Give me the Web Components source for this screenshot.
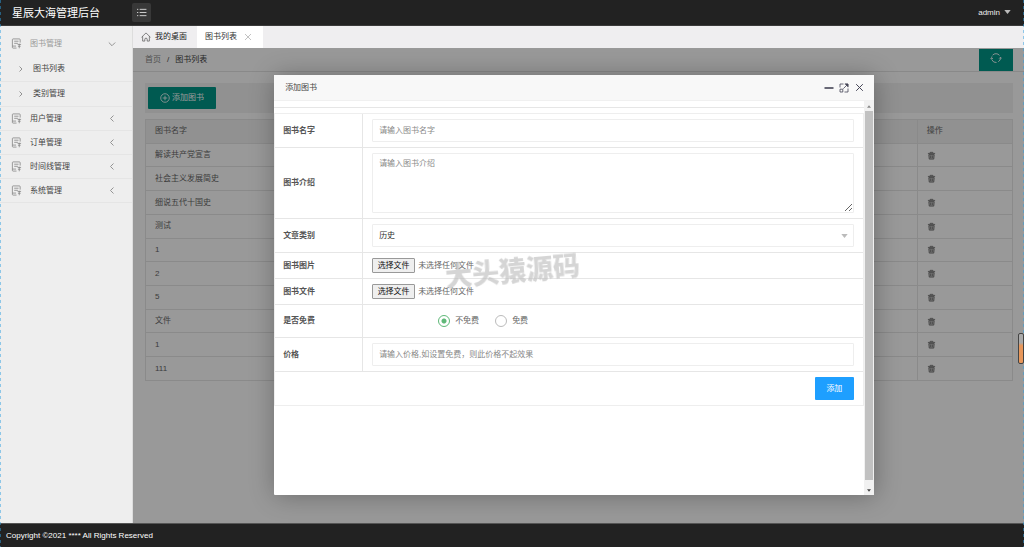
<!DOCTYPE html>
<html lang="zh-CN">
<head>
<meta charset="utf-8">
<title>星辰大海管理后台</title>
<style>
  html, body { height: 100%; margin: 0; }
  body { font: 8px/12px "Liberation Sans", "Noto Sans CJK SC", sans-serif; color: #333; background: #fff; }
</style>
</head>
<body>
<admin-app></admin-app>
<script>
const define = (name, css, html) => {
  const template = document.createElement('template');
  template.innerHTML = `<style>*{box-sizing:border-box}${css}</style>${html}`;
  customElements.define(name, class extends HTMLElement {
    constructor() {
      super();
      this.attachShadow({ mode: 'open' }).append(template.content.cloneNode(true));
    }
  });
};

const icons = {
  list: ['0 0 12 10', '<path d="M1 1.5h1.4M1 5h1.4M1 8.500h1.400M4 1.500h7.500M4 5h7.500M4 8.500h7.500"/>'],
  home: ['0 0 11 11', '<path stroke-width=".7" d="M.6 5.800 5.500 1l4.900 4.800M1.800 4.800V10h2.400V7.800q0-1 1.300-1t1.300 1V10h2.400V4.800"/>'],
  doc: ['0 0 12 12', '<path d="M10 5V1.800Q10 1 9.200 1H2.300q-.8 0-.8.800v8.400q0 .8.800.8H6M3.500 3.500h4.700M3.500 5.800h4M1.500 8.800h4M9 6.300v4.900M7.200 7h3.800M7.600 9h2.900"/>'],
  down: ['0 0 10 10', '<path d="M1.800 3.500 5 6.700l3.200-3.200"/>'],
  left: ['0 0 10 10', '<path d="M6.500 1.500 3.500 4.500l3 3"/>'],
  right: ['0 0 10 10', '<path d="M3.500 2.500 6 5 3.500 7.500"/>'],
  close: ['0 0 10 10', '<path d="m2 2 6 6M8 2 2 8"/>'],
  plus: ['0 0 11 11', '<circle cx="5.500" cy="5.500" r="4.700"/><path d="M5.500 3v5M3 5.500h5"/>'],
  refresh: ['0 0 12 12', '<path d="M2.600 3.200A4.500 4.500 0 0 1 9.500 3.400M10.500 5.500a4.500 4.500 0 0 1-2.200 4.300M6.500 10.500a4.500 4.500 0 0 1-4.600-2.700M1.500 6.500q0-1 .4-2M.6 6l1 1.300L2.900 6M9.200 6.500l1.300-1.300 1.200 1.300"/>'],
  trash: ['0 0 10 10', '<path d="M1 2.700h8M3.500 2.300V1.500h3v.8"/><path d="M2 4l.5 5h5l.5-5z" fill="currentColor" fill-opacity=".35"/><path d="M4.100 5v3M5.900 5v3"/>'],
  caret: ['0 0 8 5', '<path d="M0 0h8L4 5z" fill="currentColor" stroke="none"/>'],
  minus: ['0 0 10 10', '<path d="M.5 5h9" stroke-width="1.600"/>'],
  expand: ['0 0 10 10', '<path stroke-width=".8" d="M4.500 1H1v3.500M1 6.200V9h2.800V6.200zM5.500 9H9V5.500M5.800 1H9v3.200M8.700 1.300 4.300 5.700"/><path stroke-width=".5" d="M6.300 1H9v2.700z" fill="currentColor"/>'],
};
customElements.define('ui-icon', class extends HTMLElement {
  connectedCallback() {
    if (this.shadowRoot) return;
    const [box, body] = icons[this.getAttribute('name')];
    this.attachShadow({ mode: 'open' }).innerHTML = `
      <style>:host{display:inline-flex;flex:none;width:10px;height:10px}svg{width:100%;height:100%;display:block}</style>
      <svg viewBox="${box}" fill="none" stroke="currentColor" stroke-width=".9" aria-hidden="true">${body}</svg>`;
  }
});

define('top-bar', `
  :host{display:flex;align-items:center;height:26px;background:#222;color:#fff;border-bottom:1px solid #3a3a3a;padding:0 13px 0 12px}
  h1{font-size:11px;font-weight:400;line-height:16px;margin:0;width:120px}
  .menu{display:flex;align-items:center;justify-content:center;width:19px;height:19px;border:0;border-radius:2px;background:#383838;color:#eee;padding:0}
  .menu ui-icon{width:11px;height:9px}
  a{display:flex;align-items:center;gap:4px;margin-left:auto;color:#eee;text-decoration:none}
  a ui-icon{width:7px;height:4px;color:#bbb;margin-bottom:2px}
`, `
  <h1>星辰大海管理后台</h1>
  <button class="menu" aria-label="菜单"><ui-icon name="list"></ui-icon></button>
  <a href="#">admin <ui-icon name="caret"></ui-icon></a>
`);

define('nav-item', `
  :host{display:block;border-bottom:1px solid #e5e5e5}
  a{display:flex;align-items:center;height:23px;gap:8px;padding:0 15px 0 11px;color:#444;text-decoration:none}
  ui-icon{color:#888}
  .lead{width:11px;height:11px}
  .arrow{margin-left:auto}
  .alt{display:none}
  :host([open]){border:0}
  :host([open]) a{height:31px;color:#999;padding-top:4px}
  :host([open]) .arrow{display:none}
  :host([open]) .alt{display:block;margin-left:auto}
`, `<a href="#"><ui-icon class="lead" name="doc"></ui-icon><slot></slot><ui-icon class="arrow" name="left"></ui-icon><ui-icon class="alt" name="down"></ui-icon></a>`);

define('nav-sub', `
  :host{display:block;border-bottom:1px solid #e5e5e5}
  a{display:flex;align-items:center;height:24px;gap:7px;padding-left:16px;color:#444;text-decoration:none}
  ui-icon{color:#888}
`, `<a href="#"><ui-icon name="right"></ui-icon><slot></slot></a>`);

define('side-nav', `
  :host{display:block;flex:none;width:133px;background:#eee;border-right:1px solid #ddd}
`, `
  <nav>
    <nav-item open>图书管理</nav-item>
    <nav-sub>图书列表</nav-sub>
    <nav-sub>类别管理</nav-sub>
    <nav-item>用户管理</nav-item>
    <nav-item>订单管理</nav-item>
    <nav-item>时间线管理</nav-item>
    <nav-item>系统管理</nav-item>
  </nav>
`);

define('tab-bar', `
  :host{display:flex;height:22px;background:#efeef0}
  a{display:flex;align-items:center;color:#333;text-decoration:none;padding:0 10px 0 8px}
  .home{gap:4px;color:#222}
  .home ui-icon{color:#444}
  .on{background:#fff;gap:6px}
  .on ui-icon{color:#bbb}
`, `
  <a class="home" href="#"><ui-icon name="home"></ui-icon>我的桌面</a>
  <a class="on" href="#">图书列表 <ui-icon name="close"></ui-icon></a>
`);

define('book-list', `
  :host{display:block}
  .crumbs{display:flex;align-items:center;gap:6px;height:24px;padding:0 11px 0 12px;border-bottom:1px solid #e5e5e5;color:#444}
  .crumbs a{color:inherit;text-decoration:none}
  .crumbs a:first-child{color:#888}
  button{border:0;background:#009688;color:#fff;font:inherit;display:flex;align-items:center;justify-content:center}
  .refresh{margin-left:auto;width:34px;height:22px;padding:0 0 4px}
  .refresh ui-icon{width:12px;height:12px}
  .body{padding:11px 11px 0 12px}
  .tools{background:#f2f2f2;padding:4px 3px;margin-bottom:6px}
  .add{width:68px;height:22px;border-radius:1px;gap:2px;padding:0}
  table{width:100%;height:262px;border-collapse:collapse;table-layout:fixed}
  tr{height:23px}
  th,td{border:1px solid #e6e6e6;padding:0 9px;text-align:left;font-weight:400;color:#666}
  th{background:#f2f2f2}
  td a{display:flex;color:#666}
  td ui-icon{width:9px;height:9px}
  .name{width:16%}.act{width:11%}
`, `
  <div class="crumbs">
    <a href="#">首页</a><span>/</span><a href="#">图书列表</a>
    <button class="refresh" aria-label="刷新"><ui-icon name="refresh"></ui-icon></button>
  </div>
  <div class="body">
    <div class="tools"><button class="add"><ui-icon name="plus"></ui-icon>添加图书</button></div>
    <table>
      <tbody>
        <tr><th class="name">图书名字</th><th></th><th class="act">操作</th></tr>
        ${['解读共产党宣言', '社会主义发展简史', '细说五代十国史', '测试', '1', '2', '5', '文件', '1', '111'].map(t =>
          `<tr><td>${t}</td><td></td><td><a href="#" aria-label="删除"><ui-icon name="trash"></ui-icon></a></td></tr>`).join('')}
      </tbody>
    </table>
  </div>
`);

define('form-row', `
  :host{display:grid;grid-template-columns:88px 1fr;border-bottom:1px solid #e6e6e6}
  .label{display:flex;align-items:center;padding-left:8px;border-right:1px solid #e6e6e6;font-weight:700;color:#555}
  .field{display:flex;align-items:center;padding:5px 9px;min-width:0}
`, `<div class="label"><slot name="label"></slot></div><div class="field"><slot></slot></div>`);

define('book-form', `
  :host{display:block;padding-top:6px;color:#666}
  form{border-top:1px solid #e6e6e6;padding-top:5px}
  .rows{border-top:1px solid #eee;border-right:1px solid #eee;border-left:1px solid #eee}
  input[type=text],textarea,select{display:block;width:100%;height:23px;margin:0;border:1px solid #eee;border-radius:1px;padding:0 6px;font:inherit;color:#333;background:#fff;outline:0}
  textarea{height:60px;padding-top:4px;resize:vertical}
  ::placeholder{color:#888;opacity:1}
  .pick{position:relative;display:flex;width:100%;align-items:center}
  .select ui-icon{position:absolute;right:6px;width:7px;height:4px;color:#bbb;pointer-events:none}
  select{appearance:none}
  .pick input{position:absolute;inset:0;opacity:0;width:100%;height:100%}
  .choose{border:1px solid #999;border-radius:1px;background:#efefef;color:#111;height:15px;line-height:13px;width:43px;margin-right:3px;text-align:center;white-space:nowrap}
  .radios{display:flex;align-items:center;gap:16px;height:22px;padding-left:66px}
  .radios label{display:flex;align-items:center;gap:5px}
  input[type=radio]{appearance:none;width:12px;height:12px;margin:0;border:1px solid #bbb;border-radius:50%;background:#fff}
  input[type=radio]:checked{border-color:#5fb878;background:radial-gradient(circle,#5fb878 0 2px,#fff 3px)}
  .submit{display:flex;justify-content:flex-end;padding:5px 9px;border-bottom:1px solid #eee}
  button{width:39px;height:23px;border:0;border-radius:1px;background:#1e9fff;color:#fff;font:inherit;padding:0}
`, `
  <form>
    <div class="rows">
      <form-row><label slot="label" for="name">图书名字</label><input type="text" id="name" placeholder="请输入图书名字"></form-row>
      <form-row><label slot="label" for="intro">图书介绍</label><textarea id="intro" placeholder="请输入图书介绍"></textarea></form-row>
      <form-row><label slot="label" for="kind">文章类别</label><div class="pick select"><select id="kind"><option>历史</option></select><ui-icon name="caret"></ui-icon></div></form-row>
      <form-row><label slot="label" for="cover">图书图片</label><div class="pick"><input type="file" id="cover"><span class="choose">选择文件</span><span>未选择任何文件</span></div></form-row>
      <form-row><label slot="label" for="file">图书文件</label><div class="pick"><input type="file" id="file"><span class="choose">选择文件</span><span>未选择任何文件</span></div></form-row>
      <form-row><span slot="label">是否免费</span><div class="radios"><label><input type="radio" name="free" checked>不免费</label><label><input type="radio" name="free">免费</label></div></form-row>
      <form-row><label slot="label" for="price">价格</label><input type="text" id="price" placeholder="请输入价格,如设置免费，则此价格不起效果"></form-row>
      <div class="submit"><button type="button">添加</button></div>
    </div>
  </form>
`);

define('scroll-rail', `
  :host{display:flex;flex-direction:column;flex:none;width:10px;background:#f1f1f1}
  span{display:flex;align-items:center;justify-content:center;height:10px;color:#888}
  span ui-icon{width:4px;height:3px}
  .up ui-icon{rotate:180deg}
  .down{height:15px;padding-top:5px;color:#444}
  .thumb{flex:1;margin:0 1px;background:#c1c1c1}
`, `<span class="up"><ui-icon name="caret"></ui-icon></span><div class="thumb"></div><span class="down"><ui-icon name="caret"></ui-icon></span>`);

define('modal-window', `
  :host{display:flex;flex-direction:column;background:#fff;border-radius:1px;box-shadow:1px 1px 26px rgba(0,0,0,.3)}
  header{display:flex;align-items:center;gap:5px;height:26px;flex:none;padding:0 9px 0 11px;background:#f8f8f8;border-bottom:1px solid #f0f0f0}
  h2{flex:1;margin:0;font-size:inherit;font-weight:400;color:#444}
  button{display:flex;border:0;background:none;padding:0;color:#445}
  .x ui-icon{width:11px;height:11px}
  .content{display:flex;flex:1;min-height:0}
  .page{flex:1;min-width:0;overflow:hidden}
`, `
  <header><h2><slot name="title"></slot></h2>
    <button aria-label="最小化"><ui-icon name="minus"></ui-icon></button>
    <button aria-label="最大化"><ui-icon name="expand"></ui-icon></button>
    <button class="x" aria-label="关闭"><ui-icon name="close"></ui-icon></button>
  </header>
  <div class="content"><div class="page"><slot></slot></div><scroll-rail></scroll-rail></div>
`);

define('page-footer', `
  :host{display:flex;align-items:center;height:24px;flex:none;background:#222;color:#fff;padding-left:6px;border-top:1px solid #555}
`, `Copyright ©2021 **** All Rights Reserved`);

define('admin-app', `
  :host{display:flex;flex-direction:column;min-height:100vh;position:relative}
  .main{display:flex;flex:1}
  .work{flex:1;min-width:0;display:flex;flex-direction:column}
  .frame{position:relative;flex:1;overflow:hidden}
  .shade{position:absolute;inset:0;display:flex;justify-content:center;padding:27px 9px 28px 0;background:rgba(0,0,0,.4)}
  modal-window{width:68%}
  .mark{position:absolute;left:35%;top:205px;font:900 27px/34px "Noto Sans CJK SC",sans-serif;color:rgba(190,190,190,.65);rotate:-5deg;white-space:nowrap;pointer-events:none}
  .edge{position:absolute;top:0;bottom:0;width:1px;background:repeating-linear-gradient(#2d9fe0 0 3px,transparent 3px 6px);opacity:.5}
  .edge.l{left:0}.edge.r{right:0}
  .grip{position:absolute;right:0;top:333px;width:6px;height:31px;border:1px solid #444;border-radius:2px;background:linear-gradient(#aaa 30%,#e8975a 40%)}
`, `
  <top-bar></top-bar>
  <div class="main">
    <side-nav></side-nav>
    <div class="work">
      <tab-bar></tab-bar>
      <div class="frame">
        <book-list></book-list>
        <div class="shade"><modal-window><span slot="title">添加图书</span><book-form></book-form></modal-window></div>
        <div class="mark">大头猿源码</div>
      </div>
    </div>
  </div>
  <page-footer></page-footer>
  <div class="edge l"></div><div class="edge r"></div><div class="grip"></div>
`);
</script>
</body>
</html>
